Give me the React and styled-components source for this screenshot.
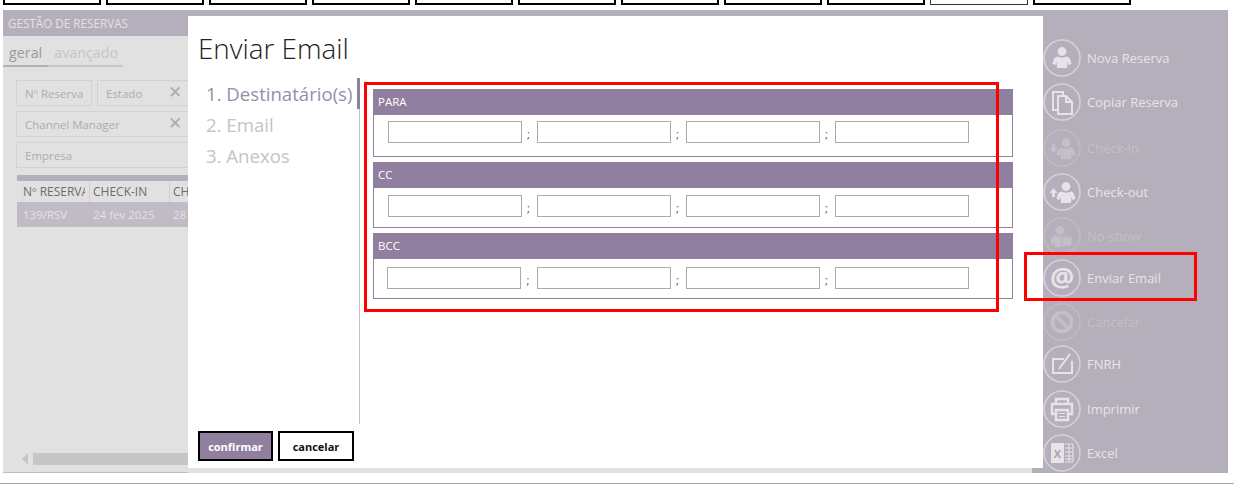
import React from 'react'
import styled, { createGlobalStyle } from 'styled-components'

const GlobalStyle = createGlobalStyle`
    html, body {
        margin: 0;
        padding: 0;
        background: #fff;
        font-family: "Open Sans", "Noto Sans", sans-serif;
    }
    * { box-sizing: border-box; }
`

const LILAC = '#917f9f'
const MUTED = '#b5afbb'

const topButtons = [false, false, false, false, false, false, false, false, false, true, false]

const sections = [
    { label: 'PARA', top: 6, height: 68, inset: 14 },
    { label: 'CC', top: 7, height: 66, inset: 14 },
    { label: 'BCC', top: 8, height: 66, inset: 13, wideFirst: true },
]

const Person = ({ x = 0, y = 0 }) => (
    <g transform={`translate(${x} ${y})`}>
        <circle cx="0" cy="-6.5" r="4.4" />
        <path d="M-4.5 -1.5 C-7.5 -1 -8.5 1 -9.5 6 L-6.5 7 L-5.5 3.5 L-5 10 L5 10 L5.5 3.5 L6.5 7 L9.5 6 C8.5 1 7.5 -1 4.5 -1.5 C2 0 -2 0 -4.5 -1.5 Z" />
    </g>
)

const icons = {
    person: <g fill="currentColor"><Person x={19} y={19} /></g>,
    copy: (
        <g fill="none" stroke="currentColor" strokeWidth="2">
            <path d="M15 27 H10 V9 H20 V13" />
            <path d="M15 13 H23 L29 19 V31 H15 Z" />
            <path d="M23 13 V19 H29" />
        </g>
    ),
    checkin: (
        <g fill="currentColor">
            <Person x={23} y={20} />
            <path d="M9 15 H12 V19 H14.5 L10.5 24 L6.5 19 H9 Z" />
        </g>
    ),
    checkout: (
        <g fill="currentColor">
            <Person x={23} y={20} />
            <path d="M9 24 H12 V20 H14.5 L10.5 15 L6.5 20 H9 Z" />
        </g>
    ),
    noshow: (
        <g fill="currentColor">
            <Person x={17} y={20} />
            <rect x="19" y="20" width="10" height="9" stroke={MUTED} strokeWidth="1" />
        </g>
    ),
    at: (
        <text x="19" y="28" textAnchor="middle" fontSize="27" fontWeight="700" fill="currentColor" fontFamily="'Open Sans', sans-serif">@</text>
    ),
    cancel: (
        <g fill="none" stroke="currentColor" strokeWidth="3.6">
            <circle cx="19" cy="19" r="9.5" />
            <path d="M12.5 12.5 L25.5 25.5" />
        </g>
    ),
    fnrh: (
        <g fill="none" stroke="currentColor" strokeWidth="2">
            <path d="M21 14 H10 V28 H29 V16" />
            <path d="M16 24 L27 9" />
        </g>
    ),
    print: (
        <g fill="none" stroke="currentColor" strokeWidth="2.4">
            <path d="M13 14 V9 H25 V14" />
            <path d="M13 24 H9 V14 H29 V24 H25" />
            <path d="M13 20 H25 V30 H13 Z" fill={MUTED} />
            <path d="M16 23.5 H22 M16 26.5 H22" strokeWidth="1" />
        </g>
    ),
    excel: (
        <g>
            <rect x="8" y="9" width="13" height="20" fill="currentColor" />
            <text x="14.5" y="23.5" textAnchor="middle" fontSize="11" fontWeight="700" fill="#a9a4ae" fontFamily="'Open Sans', sans-serif">X</text>
            <path d="M22 10 H30 V28 H22 M22 14 H30 M22 18 H30 M22 22 H30 M22 25 H30 M26 10 V28" fill="none" stroke="currentColor" strokeWidth="1" />
        </g>
    ),
}

const actions = [
    { label: 'Nova Reserva', icon: 'person', gap: 0 },
    { label: 'Copiar Reserva', icon: 'copy', gap: 5 },
    { label: 'Check-in', icon: 'checkin', gap: 7, off: true },
    { label: 'Check-out', icon: 'checkout', gap: 5 },
    { label: 'No-show', icon: 'noshow', gap: 5, off: true },
    { label: 'Enviar Email', icon: 'at', gap: 3 },
    { label: 'Cancelar', icon: 'cancel', gap: 5, off: true },
    { label: 'FNRH', icon: 'fnrh', gap: 3 },
    { label: 'Imprimir', icon: 'print', gap: 6 },
    { label: 'Excel', icon: 'excel', gap: 5 },
]

function App() {
    return (
        <Page>
            <GlobalStyle />
            <TopBar>
                {topButtons.map((thin, i) => (
                    <TopButton key={i} $thin={thin} />
                ))}
            </TopBar>
            <Workspace>
                <ListPanel>
                    <PanelTitle>GESTÃO DE RESERVAS</PanelTitle>
                    <Tabs>
                        <Tab $active>geral</Tab>
                        <Tab>avançado</Tab>
                    </Tabs>
                    <Filters>
                        <FilterRow>
                            <Filter $width={76}>Nº Reserva</Filter>
                            <Filter $width={200}>Estado<Clear $at={70}>✕</Clear></Filter>
                        </FilterRow>
                        <FilterRow>
                            <Filter $width={281}>Channel Manager<Clear $at={151}>✕</Clear></Filter>
                        </FilterRow>
                        <FilterRow>
                            <Filter $width={281}>Empresa</Filter>
                        </FilterRow>
                    </Filters>
                    <GridTable>
                        <GridHead>
                            <HeadCell $width={73} $first><HeadLabel>Nº RESERVA</HeadLabel></HeadCell>
                            <HeadCell $width={80}><HeadLabel>CHECK-IN</HeadLabel></HeadCell>
                            <HeadCell $width={80}><HeadLabel>CHECK-OUT</HeadLabel></HeadCell>
                        </GridHead>
                        <GridRow>
                            <RowCell $width={73} $first>139/RSV</RowCell>
                            <RowCell $width={80}>24 fev 2025</RowCell>
                            <RowCell $width={80}>28 fev 2025</RowCell>
                        </GridRow>
                    </GridTable>
                    <ScrollBar>
                        <ScrollArrow />
                        <ScrollThumb />
                    </ScrollBar>
                </ListPanel>

                <ModalColumn>
                    <Modal>
                        <ModalTitle>Enviar Email</ModalTitle>
                        <ModalBody>
                            <Steps>
                                <Step $active>1. Destinatário(s)</Step>
                                <Step>2. Email</Step>
                                <Step>3. Anexos</Step>
                            </Steps>
                            <StepDivider />
                            <Sections>
                                {sections.map((s) => (
                                    <Section key={s.label} $height={s.height}>
                                        <SectionHead>{s.label}</SectionHead>
                                        <SectionFields $top={s.top} $inset={s.inset}>
                                            {[0, 1, 2, 3].map((n) => (
                                                <React.Fragment key={n}>
                                                    <EmailField type="text" />
                                                    {n < 3 && <Separator $wide={s.wideFirst && n === 0}>;</Separator>}
                                                </React.Fragment>
                                            ))}
                                        </SectionFields>
                                    </Section>
                                ))}
                            </Sections>
                        </ModalBody>
                        <ModalFooter>
                            <FooterButton $primary>confirmar</FooterButton>
                            <FooterButton>cancelar</FooterButton>
                        </ModalFooter>
                    </Modal>
                    <ModalEdge />
                </ModalColumn>

                <ActionBar>
                    {actions.map((a) => (
                        <Action key={a.label} $gap={a.gap} $off={a.off}>
                            <ActionIcon viewBox="0 0 38 38">
                                <circle cx="19" cy="19" r="18" fill="none" stroke="currentColor" strokeWidth="1.6" opacity="0.65" />
                                {icons[a.icon]}
                            </ActionIcon>
                            <ActionLabel>{a.label}</ActionLabel>
                        </Action>
                    ))}
                </ActionBar>
            </Workspace>
            <Highlight $left={364} $top={82} $width={635} $height={230} />
            <Highlight $left={1024} $top={252} $width={173} $height={49} />
        </Page>
    )
}

const Page = styled.div`
    position: relative;
    width: 1234px;
    height: 484px;
    overflow: hidden;
    background: #fff;
    border-bottom: 1px solid #a79fae;
`

const TopBar = styled.div`
    display: flex;
    gap: 5px;
    height: 10px;
    padding-left: 3px;
`

const TopButton = styled.div`
    width: 98px;
    height: 5px;
    background: #fff;
    border: ${(p) => (p.$thin ? '1px' : '2px')} solid ${(p) => (p.$thin ? '#333' : '#000')};
    border-top: none;
`

const Workspace = styled.div`
    display: flex;
    height: 463px;
    margin-left: 3px;
    width: 1225px;
    background: ${MUTED};
`

const ListPanel = styled.div`
    position: relative;
    width: 185px;
    background: #e1e1e1;
    overflow: hidden;
    border-bottom: 1px solid #c0bbc5;
`

const PanelTitle = styled.div`
    height: 26px;
    padding-left: 5px;
    background: ${MUTED};
    color: #e4e1e7;
    font-size: 11.7px;
    font-weight: 400;
    line-height: 26px;
    white-space: nowrap;
`

const Tabs = styled.div`
    display: flex;
    width: 120px;
    height: 31px;
    border-bottom: 2px solid #c9c5cd;
`

const Tab = styled.div`
    height: 31px;
    padding: 6px 6px 0;
    font-size: 14.3px;
    line-height: 22px;
    color: ${(p) => (p.$active ? '#9c97a3' : '#c6c3c9')};
    border-bottom: 2px solid ${(p) => (p.$active ? MUTED : 'transparent')};
`

const Filters = styled.div`
    display: flex;
    flex-direction: column;
    gap: 5px;
    margin: 13px 0 0 13px;
`

const FilterRow = styled.div`
    display: flex;
    gap: 5px;
`

const Filter = styled.div`
    position: relative;
    flex: none;
    width: ${(p) => p.$width}px;
    height: 26px;
    padding-left: 8px;
    border: 1px solid #d2d2d2;
    color: #aeabb2;
    font-size: 11.5px;
    line-height: 26px;
    white-space: nowrap;
`

const Clear = styled.span`
    position: absolute;
    left: ${(p) => p.$at}px;
    top: -2px;
    color: #aeabb2;
    font-size: 17px;
`

const GridTable = styled.div`
    margin: 7px 0 0 14px;
    width: 300px;
    border-top: 6px solid ${MUTED};
`

const GridHead = styled.div`
    display: flex;
    height: 21px;
`

const HeadCell = styled.div`
    width: ${(p) => p.$width}px;
    flex: none;
    padding: 0 4px 0 ${(p) => (p.$first ? 6 : 3)}px;
    border-right: 1px solid #cfcfcf;
    color: #6f6a73;
    font-size: 12px;
    font-weight: 500;
    line-height: 21px;
`

const HeadLabel = styled.div`
    overflow: hidden;
    white-space: nowrap;
`

const GridRow = styled.div`
    display: flex;
    height: 25px;
    background: #c0bbc5;
`

const RowCell = styled.div`
    width: ${(p) => p.$width}px;
    flex: none;
    padding-left: ${(p) => (p.$first ? 6 : 3)}px;
    color: #e4e2e7;
    font-size: 11.5px;
    line-height: 25px;
    white-space: nowrap;
`

const ScrollBar = styled.div`
    position: absolute;
    left: 19px;
    bottom: 7px;
    right: 0;
    display: flex;
    align-items: center;
    gap: 5px;
    height: 12px;
`

const ScrollArrow = styled.div`
    width: 0;
    height: 0;
    border-top: 6px solid transparent;
    border-bottom: 6px solid transparent;
    border-right: 6px solid #c6c6c6;
`

const ScrollThumb = styled.div`
    flex: 1;
    height: 12px;
    background: #c6c6c6;
`

const ModalColumn = styled.div`
    display: flex;
    flex-direction: column;
    width: 855px;
    padding-top: 6px;
`

const Modal = styled.div`
    display: flex;
    flex-direction: column;
    height: 452px;
    padding: 14px 30px 7px 10px;
    background: #fff;
`

const ModalEdge = styled.div`
    width: 844px;
    height: 5px;
    background: #e1e1e1;
`

const ModalTitle = styled.div`
    height: 48px;
    color: #222;
    font-size: 27.8px;
    font-weight: 300;
    line-height: 36px;
`

const ModalBody = styled.div`
    display: flex;
    height: 346px;
`

const Steps = styled.div`
    width: 159px;
    padding-left: 8px;
`

const Step = styled.div`
    height: 31px;
    color: ${(p) => (p.$active ? '#9a8da8' : '#c4c4c4')};
    font-size: 18.6px;
    line-height: 31px;
    white-space: nowrap;
`

const StepDivider = styled.div`
    position: relative;
    width: 1px;
    margin-left: 2px;
    background: #c4c4c4;

    &::before {
        content: "";
        position: absolute;
        top: 0;
        right: 0;
        width: 3px;
        height: 31px;
        background: ${LILAC};
    }
`

const Sections = styled.div`
    display: flex;
    flex-direction: column;
    gap: 5px;
    width: 640px;
    margin: 11px 0 0 13px;
`

const Section = styled.div`
    display: flex;
    flex-direction: column;
    height: ${(p) => p.$height}px;
    border: 1px solid ${LILAC};
    border-top: none;
`

const SectionHead = styled.div`
    height: 26px;
    margin: 0 -1px;
    padding-left: 5px;
    background: ${LILAC};
    color: #fff;
    font-size: 11.5px;
    font-weight: 400;
    line-height: 26px;
`

const SectionFields = styled.div`
    display: flex;
    align-items: flex-start;
    padding: ${(p) => p.$top}px 0 0 ${(p) => p.$inset}px;
`

const EmailField = styled.input`
    width: 134px;
    height: 22px;
    flex: none;
    border: 1px solid #aaa;
    background: #fff;
    outline: none;
`

const Separator = styled.span`
    width: ${(p) => (p.$wide ? 16 : 15)}px;
    flex: none;
    padding: 5px 2px 0 0;
    color: #37508f;
    font-size: 11px;
    line-height: 16px;
    text-align: center;
`

const ModalFooter = styled.div`
    display: flex;
    gap: 5px;
    margin-top: 7px;
`

const FooterButton = styled.button`
    width: ${(p) => (p.$primary ? 75 : 76)}px;
    height: 30px;
    padding: 0;
    border: 2px solid #000;
    background: ${(p) => (p.$primary ? LILAC : '#fff')};
    color: ${(p) => (p.$primary ? '#fff' : '#111')};
    font-family: inherit;
    font-size: 11px;
    font-weight: 700;
`

const ActionBar = styled.div`
    display: flex;
    flex-direction: column;
    width: 185px;
    padding-top: 28px;
`

const Action = styled.div`
    display: flex;
    align-items: center;
    gap: 6px;
    height: 39px;
    margin-top: ${(p) => p.$gap}px;
    color: ${(p) => (p.$off ? '#c4c0c8' : '#e6e4e8')};
    font-size: 13px;
    white-space: nowrap;
`

const ActionLabel = styled.span`
    margin-top: 1px;
`

const ActionIcon = styled.svg`
    width: 38px;
    height: 38px;
    flex: none;
`

const Highlight = styled.div`
    position: absolute;
    left: ${(p) => p.$left}px;
    top: ${(p) => p.$top}px;
    width: ${(p) => p.$width}px;
    height: ${(p) => p.$height}px;
    border: 3px solid #f00;
    pointer-events: none;
`

export default App
